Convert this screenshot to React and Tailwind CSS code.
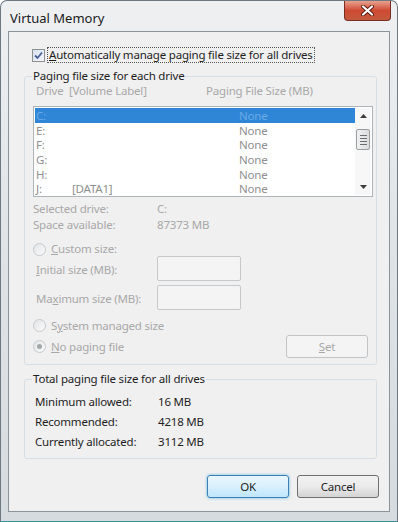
import React from 'react';

const drives = [
  { letter: 'C:', label: '', size: 'None' },
  { letter: 'E:', label: '', size: 'None' },
  { letter: 'F:', label: '', size: 'None' },
  { letter: 'G:', label: '', size: 'None' },
  { letter: 'H:', label: '', size: 'None' },
  { letter: 'J:', label: '[DATA1]', size: 'None' },
];

const totals = [
  ['Minimum allowed:', '16 MB'],
  ['Recommended:', '4218 MB'],
  ['Currently allocated:', '3112 MB'],
];

function Radio({ checked }) {
  return (
    <span className="flex h-[13px] w-[13px] shrink-0 items-center justify-center rounded-full border border-[#c6cacd] bg-gradient-to-br from-[#e2e4e6] to-[#fbfbfb]">
      {checked && <span className="h-[5px] w-[5px] rounded-full bg-[#a3a7aa]" />}
    </span>
  );
}

function Checkbox() {
  return (
    <span className="flex h-[13px] w-[13px] shrink-0 items-center justify-center border border-[#8e8f8f] bg-gradient-to-br from-[#d6e2ef] to-[#f4f7fb]">
      <svg width="9" height="9" viewBox="0 0 9 9">
        <path d="M1 4.5 L3.5 7 L8 1.5" fill="none" stroke="#4a5f97" strokeWidth="1.8" />
      </svg>
    </span>
  );
}

function Scrollbar() {
  return (
    <div className="flex w-[16px] flex-col items-center bg-[#f7f7f7]">
      <div className="flex h-[16px] w-full items-center justify-center">
        <svg width="7" height="4" viewBox="0 0 7 4"><path d="M0 4 L3.5 0 L7 4 Z" fill="#3c3c3c" /></svg>
      </div>
      <div className="mt-[5px] flex h-[21px] w-[14px] flex-col items-center justify-center gap-[2px] rounded-[2px] border border-[#9a9fa3] bg-gradient-to-r from-[#f2f2f2] to-[#dcdcdc]">
        <span className="h-px w-[7px] bg-[#6b6f72]" />
        <span className="h-px w-[7px] bg-[#6b6f72]" />
        <span className="h-px w-[7px] bg-[#6b6f72]" />
        <span className="h-px w-[7px] bg-[#6b6f72]" />
      </div>
      <div className="flex-1" />
      <div className="flex h-[16px] w-full items-center justify-center">
        <svg width="7" height="4" viewBox="0 0 7 4"><path d="M0 0 L3.5 4 L7 0 Z" fill="#3c3c3c" /></svg>
      </div>
    </div>
  );
}

export default function App() {
  return (
    <div className="flex h-[522px] w-[398px] flex-col overflow-hidden rounded-t-[7px] border border-[#6d7880] border-b-[#3f8c9c] bg-gradient-to-b from-[#eef0f2] via-[#dfe3e6] to-[#d6dbdf] font-['Noto_Sans',sans-serif] text-[11.5px] tracking-[-0.2px] text-[#1e1e1e]">
      {/* Title bar */}
      <div className="flex h-[30px] shrink-0 items-start justify-between pl-[9px] pr-[6px]">
        <span className="pt-[9px] text-[13px] leading-[16px] tracking-normal text-[#202020]">Virtual Memory</span>
        <button
          type="button"
          className="flex h-[20px] w-[47px] items-center justify-center rounded-b-[4px] border border-t-0 border-[#7a2d22] bg-gradient-to-b from-[#e6a08f] via-[#cf4a33] to-[#c35a3c]"
        >
          <svg width="13" height="11" viewBox="0 0 13 11">
            <path d="M2 1.5 L11 9.5 M11 1.5 L2 9.5" stroke="#5a1a10" strokeWidth="4" strokeLinecap="round" />
            <path d="M2 1.5 L11 9.5 M11 1.5 L2 9.5" stroke="#ffffff" strokeWidth="2.2" strokeLinecap="round" />
          </svg>
        </button>
      </div>

      {/* Client area */}
      <div className="mx-[7px] mb-[9px] flex flex-1 flex-col border border-[#8c9399] bg-[#f0f0f0] leading-[14px]">
        {/* Auto manage checkbox */}
        <div className="ml-[23px] mt-[15px] flex h-[16px] items-center gap-[2px]">
          <Checkbox />
          <span className="border border-dotted border-[#555] px-[1px] leading-[14px]">
            <u>A</u>utomatically manage paging file size for all drives
          </span>
        </div>

        {/* Per-drive group */}
        <fieldset className="ml-[15px] mt-[6px] w-[353px] rounded-[3px] border border-[#d5dfe5]">
          <legend className="ml-[7px] px-[1px] leading-[14px] text-[#1e1e1e]">Paging file size for each drive</legend>
          <div className="mt-px flex h-[14px] pl-[11px] text-[#a8a8a8]">
            <span className="w-[170px]">Drive&nbsp; [Volume Label]</span>
            <span>Paging File Size (MB)</span>
          </div>

          <div className="ml-[8px] mt-[8px] flex h-[91px] w-[340px] border border-[#aeb4b8] bg-white p-px">
            <div className="flex-1">
              {drives.map((d, i) => (
                <div
                  key={d.letter}
                  className={`flex h-[14.7px] items-center overflow-hidden pl-[1px] leading-[13px] ${
                    i === 0 ? 'bg-[#2f86d6] text-[#6aaae6]' : 'text-[#8f8f8f]'
                  }`}
                >
                  <span className="w-[36px]">{d.letter}</span>
                  <span className="w-[167px]">{d.label}</span>
                  <span>{d.size}</span>
                </div>
              ))}
            </div>
            <Scrollbar />
          </div>

          {/* Selected drive info */}
          <div className="mt-[4px] pl-[8px] leading-[16px] text-[#a8a8a8]">
            <div className="flex h-[16px]">
              <span className="w-[124px]">Selected drive:</span>
              <span>C:</span>
            </div>
            <div className="flex h-[16px]">
              <span className="w-[124px]">Space available:</span>
              <span>87373 MB</span>
            </div>
          </div>

          <div className="mt-[9px] flex h-[14px] items-center gap-[5px] pl-[8px] text-[#a8a8a8]">
            <Radio />
            <span>
              <u>C</u>ustom size:
            </span>
          </div>

          <div className="flex h-[25px] items-center pl-[11px] text-[#a8a8a8]">
            <span className="w-[121px] pt-[3px]">
              <u>I</u>nitial size (MB):
            </span>
            <span className="h-[25px] w-[84px] rounded-[2px] border border-[#c5c9cc] bg-[#f4f4f4]" />
          </div>
          <div className="mt-[4px] flex h-[25px] items-center pl-[11px] text-[#a8a8a8]">
            <span className="w-[121px] pt-[3px]">
              Ma<u>x</u>imum size (MB):
            </span>
            <span className="h-[25px] w-[84px] rounded-[2px] border border-[#c5c9cc] bg-[#f4f4f4]" />
          </div>

          <div className="mt-[8px] flex h-[15px] items-center gap-[5px] pl-[8px] text-[#a8a8a8]">
            <Radio />
            <span>
              S<u>y</u>stem managed size
            </span>
          </div>

          <div className="mb-[6px] mt-[2px] flex h-[23px] items-center justify-between pl-[8px] pr-[8px] text-[#a8a8a8]">
            <div className="flex items-center gap-[5px]">
              <Radio checked />
              <span>
                <u>N</u>o paging file
              </span>
            </div>
            <button
              type="button"
              className="h-[23px] w-[82px] rounded-[3px] border border-[#c0c4c7] bg-[#f4f4f4] text-[#a8a8a8]"
            >
              <u>S</u>et
            </button>
          </div>
        </fieldset>

        {/* Totals group */}
        <fieldset className="ml-[15px] mt-[7px] w-[353px] rounded-[3px] border border-[#d5dfe5]">
          <legend className="ml-[7px] px-[1px] leading-[14px] text-[#1e1e1e]">Total paging file size for all drives</legend>
          <div className="pb-[6px] pl-[10px] pt-[6px]">
            {totals.map(([label, value]) => (
              <div key={label} className="flex h-[20px] items-center">
                <span className="w-[123px]">{label}</span>
                <span>{value}</span>
              </div>
            ))}
          </div>
        </fieldset>

        {/* Dialog buttons */}
        <div className="mr-[10px] mt-[16px] flex justify-end gap-[8px]">
          <button
            type="button"
            className="h-[23px] w-[82px] rounded-[3px] border border-[#3c7fb1] bg-gradient-to-b from-[#eaf6fd] via-[#d9f0fc] to-[#bee6fd] text-[#1e1e1e] shadow-[0_0_3px_#5fb6e8]"
          >
            OK
          </button>
          <button
            type="button"
            className="h-[23px] w-[82px] rounded-[3px] border border-[#707070] bg-gradient-to-b from-[#f2f2f2] via-[#ebebeb] to-[#d4d4d4] text-[#1e1e1e]"
          >
            Cancel
          </button>
        </div>
      </div>
    </div>
  );
}
